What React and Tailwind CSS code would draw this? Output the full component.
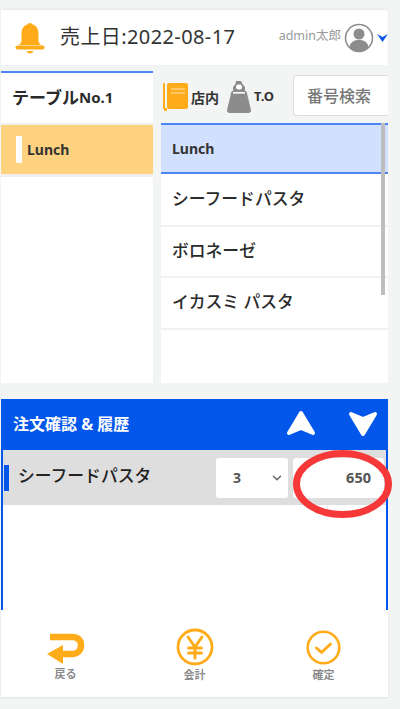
import React from 'react';
import { ChevronDown } from 'lucide-react';

const font = { fontFamily: '"Noto Sans", "Noto Sans CJK JP", sans-serif' };

const Bell = () => (
    <svg width="30" height="32" viewBox="0 0 30 32" fill="#ffab1a">
        <circle cx="15" cy="3.5" r="2.6" />
        <path d="M15 2c-5.4 0-8.5 4-8.5 9.5v6.5c0 2.500-1.200 3.700-2.500 5h22c-1.300-1.300-2.500-2.500-2.500-5v-6.500C23.500 6 20.400 2 15 2z" />
        <rect x="0.500" y="23.500" width="29" height="4" rx="2" />
        <path d="M11.500 29h7c-.5 1.500-2 2.500-3.500 2.500s-3-1-3.500-2.500z" />
    </svg>
);

const Avatar = () => (
    <svg width="30" height="30" viewBox="0 0 30 30">
        <circle cx="15" cy="15" r="13.500" fill="#fff" stroke="#8c8c8c" strokeWidth="1.600" />
        <circle cx="15" cy="11" r="5.500" fill="#8c8c8c" />
        <path d="M5.500 24.500c.5-5 4-7.500 9.500-7.500s9 2.500 9.500 7.500C22 27 18.500 28.300 15 28.300S8 27 5.500 24.500z" fill="#8c8c8c" />
    </svg>
);

const Book = () => (
    <svg width="25" height="28" viewBox="0 0 25 28">
        <rect x="0" y="0" width="2" height="26" rx="1" fill="#ffab1a" />
        <rect x="1" y="25" width="3" height="3" fill="#ffab1a" />
        <rect x="4" y="0" width="21" height="26" rx="2" fill="#ffab1a" />
        <rect x="8" y="5" width="14" height="2" fill="#ffc766" />
        <rect x="8" y="9" width="14" height="2" fill="#ffc766" />
    </svg>
);

const Bag = () => (
    <svg width="24" height="32" viewBox="0 0 24 32">
        <path d="M9 0h5l1.500 3 2.500 3v5H6V6l2.500-3z" fill="#8c8c8c" />
        <rect x="9" y="3.500" width="6" height="5" rx="2.500" fill="#fff" />
        <path d="M6 10h12c1 0 1.500.5 1.800 1.500L24 29c.2 1.800-.8 3-2.500 3h-19C.8 32-.2 30.800 0 29l4.200-17.500C4.500 10.500 5 10 6 10z" fill="#8c8c8c" />
        <rect x="6" y="11" width="12" height="1.600" fill="#fff" />
    </svg>
);

const Arrow = ({ down }) => (
    <svg width="30" height="27" viewBox="0 0 30 27" className={down ? 'rotate-180' : ''}>
        <path d="M15 3L27 23 15 18 3 23z" fill="#fff" stroke="#fff" strokeWidth="4" strokeLinejoin="round" />
    </svg>
);

const BackIcon = () => (
    <svg width="38" height="32" viewBox="0 0 38 32" className="mt-[3px]">
        <path d="M3 4h22c5.500 0 9 2.500 9 8s-3.500 9-9 9H12" fill="none" stroke="#ffab1a" strokeWidth="6.500" />
        <path d="M0 21L16 12v19z" fill="#ffab1a" />
    </svg>
);

const YenIcon = () => (
    <svg width="38" height="38" viewBox="0 0 38 38" fill="none" stroke="#ffab1a">
        <circle cx="19" cy="19" r="17" strokeWidth="2.800" />
        <path d="M12 9l7 10 7-10M19 19v11M12.500 20h13M12.500 25h13" strokeWidth="3" strokeLinecap="round" />
    </svg>
);

const CheckIcon = () => (
    <svg width="35" height="35" viewBox="0 0 35 35" fill="none" stroke="#ffab1a">
        <circle cx="17.500" cy="17.500" r="15.800" strokeWidth="2.600" />
        <path d="M10.500 18l5 4.500 9-8.500" strokeWidth="3" strokeLinecap="round" strokeLinejoin="round" />
    </svg>
);

const MenuRow = ({ name }) => (
    <div className="h-[51.5px] shrink-0 flex items-center pl-[11px] pb-[2px] bg-white border-b-2 border-[#f1f1f1] text-[16.8px] font-medium text-[#2b2b2b]">
        {name}
    </div>
);

const FooterBtn = ({ icon, label, labelClass }) => (
    <div className="flex-1 flex flex-col items-center">
        <div className="h-[38px] flex items-center justify-center">{icon}</div>
        <span className={`text-[11px] font-bold text-[#8a8a8a] leading-[14px] ${labelClass}`}>{label}</span>
    </div>
);

export default function App() {
    return (
        <div className="relative w-[400px] h-[709px] bg-[#f3f4f4] pt-[10px] pl-[1px] pr-[12px] overflow-hidden" style={font}>
            {/* header */}
            <div className="h-[55px] bg-white flex items-center pl-[14px] pr-0 shadow-[0_-1px_2px_rgba(0,0,0,0.06)]">
                <Bell />
                <span className="ml-[15px] -mt-[2px] text-[20px] tracking-[0.4px] text-[#333] whitespace-nowrap">売上日:2022-08-17</span>
                <span className="ml-auto -mt-[2px] text-[12.5px] text-[#9a9a9a] whitespace-nowrap">admin太郎</span>
                <span className="ml-[3px]"><Avatar /></span>
                <svg width="11" height="8" viewBox="0 0 11 8" className="ml-[3px] shrink-0"><path d="M0 0l5.500 3L11 0 5.500 8z" fill="#0a57e8" /></svg>
            </div>

            {/* menu area */}
            <div className="flex mt-[6px] h-[312px]">
                <div className="w-[152px] h-full flex flex-col bg-white">
                    <div className="h-[52px] border-t-2 border-[#4d86f0] pl-[11px] pb-[2px] flex items-center text-[17px] font-bold text-[#2b2b2b] leading-none">
                        テーブル<span className="text-[15px]">No.1</span>
                    </div>
                    <div className="h-[2px] bg-[#f1efec]" />
                    <div className="h-[49px] bg-[#ffd27f] flex items-center pl-[15px] text-[14px] font-bold text-[#333]">
                        <span className="w-[6px] h-[27px] bg-white mr-[5px]" />
                        Lunch
                    </div>
                    <div className="h-[3px] bg-[#f1efec]" />
                </div>

                <div className="ml-[8px] flex-1 flex flex-col min-w-0">
                    <div className="h-[52px] shrink-0 flex items-center pl-[2px]">
                        <Book />
                        <span className="ml-[3px] text-[14px] font-bold text-[#333]">店内</span>
                        <span className="ml-[8px]"><Bag /></span>
                        <span className="ml-[3px] text-[13px] font-bold text-[#333]">T.O</span>
                        <div className="ml-auto w-[95px] h-[41px] mt-[-3px] bg-white border border-[#dcdcdc] border-r-0 rounded-l-[4px] flex items-center pl-[13px] text-[16px] font-medium text-[#777]">
                            番号検索
                        </div>
                    </div>
                    <div className="relative flex-1 flex flex-col bg-white overflow-hidden">
                        <div className="h-[51px] shrink-0 bg-[#d0e0fd] border-y-2 border-[#4d86f0] flex items-center pl-[11px] text-[14px] font-bold text-[#333] mb-[1px]">
                            Lunch
                        </div>
                        <MenuRow name="シーフードパスタ" />
                        <MenuRow name="ボロネーゼ" />
                        <MenuRow name="イカスミ パスタ" />
                        <div className="absolute right-[3px] top-0 w-[4px] h-[172px] bg-[#bdbdbd]" />
                    </div>
                </div>
            </div>

            {/* order panel */}
            <div className="mt-[16px] h-[211px] border-x-2 border-[#0256ea] bg-white flex flex-col">
                <div className="h-[51px] -mx-[1px] bg-[#0256ea] flex items-center pl-[11px] pr-[9px] pb-[2px] text-[16px] font-bold text-white">
                    注文確認 & 履歴
                    <span className="ml-auto"><Arrow /></span>
                    <span className="ml-[32px]"><Arrow down /></span>
                </div>
                <div className="h-[55px] bg-[#dedede] flex items-center pl-[1px] pr-[2px]">
                    <span className="w-[5px] h-[26px] bg-[#0256ea]" />
                    <span className="ml-[9px] text-[16.8px] font-medium text-[#222] -mt-[4px]">シーフードパスタ</span>
                    <div className="ml-auto w-[72px] h-[40px] bg-white rounded-[3px] flex items-center justify-between pl-[17px] pr-[4px] text-[14px] font-bold text-[#555]">
                        3
                        <ChevronDown size={14} strokeWidth={2.500} className="text-[#666]" />
                    </div>
                    <div className="ml-[5px] w-[91px] h-[40px] bg-white rounded-[3px] flex items-center justify-end pr-[13px] text-[14.5px] font-bold text-[#555]">
                        650
                    </div>
                </div>
            </div>

            {/* footer */}
            <div className="h-[87px] bg-white flex pt-[18px] shadow-[0_1px_2px_rgba(0,0,0,0.08)]">
                <FooterBtn icon={<BackIcon />} label="戻る" labelClass="mt-[1px]" />
                <FooterBtn icon={<YenIcon />} label="会計" labelClass="mt-[2px]" />
                <FooterBtn icon={<CheckIcon />} label="確定" labelClass="mt-[2px]" />
            </div>

            {/* red marker drawn over the price */}
            <svg width="108" height="80" viewBox="0 0 108 80" className="absolute left-[289px] top-[444px]">
                <ellipse cx="53.500" cy="40" rx="46" ry="30.500" fill="none" stroke="#f73838" strokeWidth="7" />
            </svg>
        </div>
    );
}
